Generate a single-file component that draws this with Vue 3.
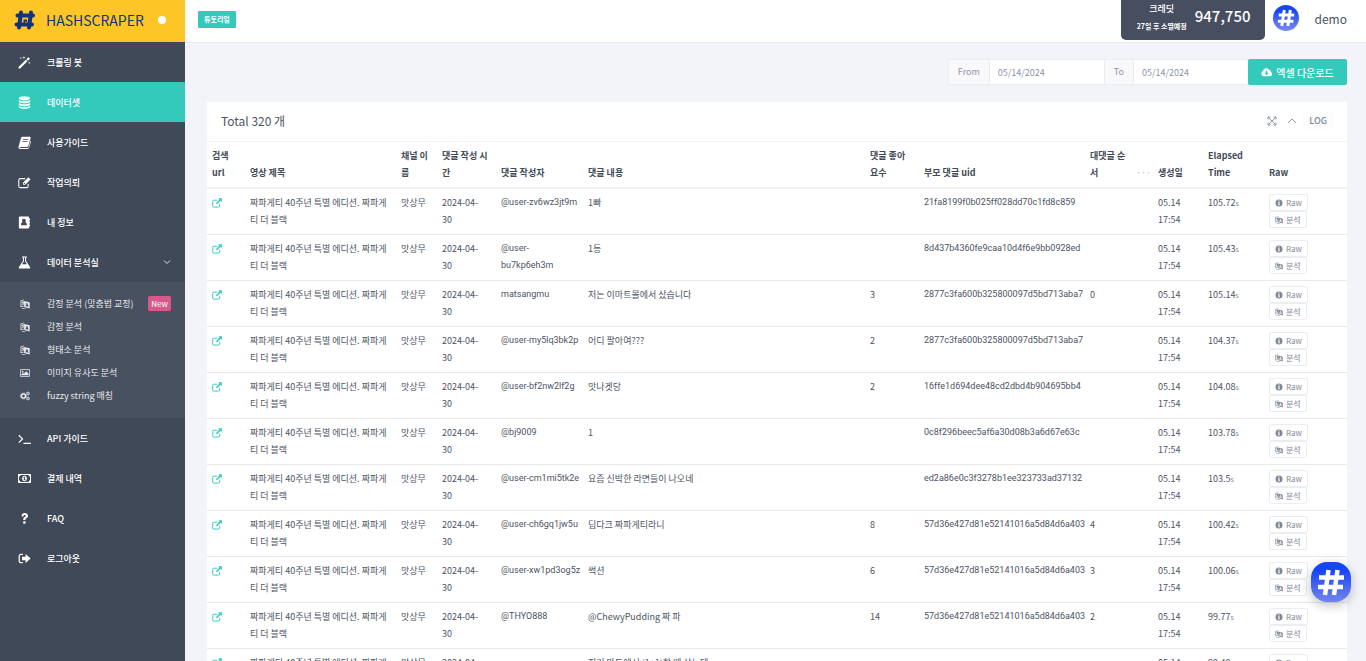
<script setup>
import { ref } from 'vue'

const from = ref('05/14/2024')
const to = ref('05/14/2024')

const mainMenu = [
  { icon: 'magic', label: '크롤링 봇' },
  { icon: 'database', label: '데이터셋', active: true },
  { icon: 'book', label: '사용가이드' },
  { icon: 'edit', label: '작업의뢰' },
  { icon: 'contact', label: '내 정보' },
  { icon: 'flask', label: '데이터 분석실', open: true }
]
const subMenu = [
  { icon: 'lang', label: '감정 분석 (맞춤법 교정)', badge: 'New' },
  { icon: 'lang', label: '감정 분석' },
  { icon: 'lang', label: '형태소 분석' },
  { icon: 'image', label: '이미지 유사도 분석' },
  { icon: 'cogs', label: 'fuzzy string 매칭' }
]
const lowerMenu = [
  { icon: 'terminal', label: 'API 가이드' },
  { icon: 'money', label: '결제 내역' },
  { icon: 'question', label: 'FAQ' },
  { icon: 'signout', label: '로그아웃' }
]

const icons = {
  magic: '<path d="M1 13.2 9.6 4.600l2 2L3 15.200a1.400 1.400 0 0 1-2-2z"/><path d="m10.300 3.900 1.600-1.600a1.400 1.400 0 0 1 2 2l-1.600 1.600z"/><path d="M3.500 1l.4 1.100L5 2.500l-1.100.4L3.500 4l-.4-1.100L2 2.500l1.100-.4zM7.300 0l.5 1.500 1.500.5-1.500.5L7.300 4l-.5-1.500L5.300 2l1.500-.5zM14 7l.4 1.100 1.100.4-1.100.4L14 10l-.4-1.100-1.100-.4 1.100-.4z"/>',
  database: '<ellipse cx="8" cy="2.800" rx="7" ry="2.600"/><path d="M1 4.800c2.500 2 11.500 2 14 0v2c0 3-14 3-14 0zM1 8.500c2.500 2 11.500 2 14 0v2c0 3-14 3-14 0zM1 12.200c2.500 2 11.500 2 14 0v1.300c0 3-14 3-14 0z"/>',
  book: '<path fill-rule="evenodd" d="M5.800 1h8.400c1 0 1.600.8 1.300 1.800l-2.800 9.400c-.3.900-.9 1.300-1.900 1.300H2.900c-.7 0-.9.5-.4 1 .2.300.6.400 1 .4h8.300c.6 0 1-.3 1.200-.8l2.500-8.300c.5.400.6.900.4 1.500l-2.400 7.500c-.3.800-1 1.300-1.900 1.300H3C1.400 16 .2 14.800.6 13.300L3.500 3C3.900 1.600 4.600 1 5.800 1zm.4 3-.3 1h6.500l.3-1zm-.7 2.400-.3 1h6.500l.3-1z"/>',
  edit: '<path d="M12.500 9.500v3a1.800 1.800 0 0 1-1.800 1.800H2.800A1.800 1.800 0 0 1 1 12.500V5a1.800 1.800 0 0 1 1.800-1.800h6" fill="none" stroke="currentColor" stroke-width="1.300"/><path fill-rule="evenodd" d="m12.700 1.600 2.700 2.700-6.600 6.600H6.100V8.200zM7.200 8.700v1.100h1.100l.5-.5-1.100-1.100z"/>',
  contact: '<path fill-rule="evenodd" d="M2.500.5h9.700c.8 0 1.400.6 1.400 1.400v1.300h1.200v2.300h-1.200v1.300h1.200v2.400h-1.200v1.300h1.200v2.300h-1.200v1.300c0 .8-.6 1.400-1.400 1.400H2.500c-.8 0-1.400-.6-1.400-1.400V1.900c0-.8.6-1.400 1.400-1.400zm4.800 3a2.300 2.300 0 0 0-1.600 4c-1.300.5-2 1.800-2 3.900h7.200c0-2.100-.7-3.400-2-3.900a2.300 2.300 0 0 0-1.600-4z"/>',
  flask: '<path fill-rule="evenodd" d="M5 .5h6v1.300h-1v4.400l4.800 7.200c.7 1.100.2 2.100-1.100 2.100H2.300c-1.300 0-1.800-1-1.100-2.100L6 6.200V1.800H5zm2.300 1.300v4.800L5 10h6L8.700 6.600V1.800z"/>',
  lang: '<path fill-rule="evenodd" d="M6.500 3 15.500 5.300V15l-9-2.300zm3.700 3.200-1.600 5.500 1.400.3.300-1 1.700.4.300 1.100 1.400.4-1.600-5.900zm.8 1.900.5 1.900-1.200-.3z"/><path d="M.8 2.300 6.500.7v1.400L2.200 3.300v8.200l4.300-1.200v1.400L.8 13.200z"/><path d="M3 4.500 6 3.700v5.100l-1-.2-1.200 1-.7-.8c.8-.6 1.200-1.400 1.300-2.500L3 6zM3.500 14c2 1.200 4 1.300 6 .6v1.100c-2.300.8-4.700.4-6.700-.8z"/>',
  image: '<path fill-rule="evenodd" d="M1.200 2h13.600c.7 0 1.200.5 1.200 1.200v9.600c0 .7-.5 1.200-1.200 1.200H1.200C.5 14 0 13.500 0 12.800V3.200C0 2.500.5 2 1.200 2zm0 1.200v9.600h13.600V3.200z"/><circle cx="4.200" cy="5.800" r="1.400"/><path d="M2.300 11.700V10l2.300-2.300 1.500 1.500L10 5.300l3.700 3.700v2.700z"/>',
  cogs: '<circle cx="5.500" cy="8" r="3.300" fill="none" stroke="currentColor" stroke-width="2.200"/><circle cx="5.500" cy="8" r="4.700" fill="none" stroke="currentColor" stroke-width="1.500" stroke-dasharray="2.100 1.590"/><circle cx="12.800" cy="4" r="1.800" fill="none" stroke="currentColor" stroke-width="1.400"/><circle cx="12.800" cy="4" r="2.700" fill="none" stroke="currentColor" stroke-width="1" stroke-dasharray="1.500 1.330"/><circle cx="12.800" cy="12" r="1.800" fill="none" stroke="currentColor" stroke-width="1.400"/><circle cx="12.800" cy="12" r="2.700" fill="none" stroke="currentColor" stroke-width="1" stroke-dasharray="1.500 1.330"/>',
  terminal: '<path d="m1 4 4.500 4.500L1 13M6.800 14H16" fill="none" stroke="currentColor" stroke-width="1.500"/>',
  money: '<path fill-rule="evenodd" d="M0 2.500h16v11H0zm3 1.200c0 1.100-.7 1.900-1.800 1.900v4.800c1.100 0 1.800.8 1.800 1.900h10c0-1.100.7-1.900 1.800-1.900V5.600c-1.100 0-1.800-.8-1.800-1.900z"/><path fill-rule="evenodd" d="M8 4.500c1.900 0 2.900 1.500 2.900 3.500s-1 3.500-2.900 3.500S5.100 10 5.100 8 6.100 4.500 8 4.500zm-.4 1.300-1.200 1 .5.600.6-.4v2.200h-.9v.9h2.900v-.9h-.9V5.800z"/>',
  question: '<path d="M4.300 5.200C4.500 2.700 6 1.200 8.300 1.200c2.400 0 4 1.500 4 3.500 0 1.500-.8 2.300-1.900 3-1 .6-1.200.9-1.200 1.800v.3H6.500v-.6c0-1.400.5-2.100 1.700-2.900.9-.6 1.200-.9 1.200-1.500S9 3.800 8.200 3.800c-.9 0-1.300.6-1.400 1.600zM6.500 11.500h2.800v3H6.500z"/>',
  signout: '<path d="M6 3H3.500A2 2 0 0 0 1.500 5v6a2 2 0 0 0 2 2H6" fill="none" stroke="currentColor" stroke-width="1.500"/><path d="M9.300 2.500 15.500 8l-6.200 5.500v-3.200H5V5.700h4.300z"/>',
  external: '<path d="M12.300 9v3.700a1.800 1.800 0 0 1-1.800 1.800H2.800A1.800 1.800 0 0 1 1 12.700V5.300a1.800 1.800 0 0 1 1.800-1.800h5.700" fill="none" stroke="currentColor" stroke-width="1.500"/><path d="M10 .5h5.800v5.800l-2-2-5.700 5.800-1.900-1.900L12 2.500z"/>',
  info: '<path fill-rule="evenodd" d="M8 1a7 7 0 1 1 0 14A7 7 0 0 1 8 1zM6.800 3v2h2.400V3zM6 6.500v1.300h.9v3.600H6v1.300h4v-1.300h-.9V6.500z"/>',
  cloud: '<path fill-rule="evenodd" d="M4 13.500a4 4 0 0 1-1-7.700 4.700 4.700 0 0 1 8.900-1.300c1.700 0 2.600 1.300 2.300 2.700A3.300 3.300 0 0 1 13 13.500zM7 5.500v3H4.800L8 11.900l3.200-3.400H9v-3z"/>'
}

const columns = [
  { key: 'url', label: '검색\nurl' },
  { key: 'title', label: '영상 제목' },
  { key: 'channel', label: '채널 이\n름' },
  { key: 'date', label: '댓글 작성 시\n간' },
  { key: 'author', label: '댓글 작성자' },
  { key: 'comment', label: '댓글 내용' },
  { key: 'likes', label: '댓글 좋아\n요수' },
  { key: 'uid', label: '부모 댓글 uid' },
  { key: 'order', label: '대댓글 순\n서' },
  { key: 'more', label: '···' },
  { key: 'created', label: '생성일' },
  { key: 'elapsed', label: 'Elapsed\nTime' },
  { key: 'raw', label: 'Raw' }
]

const rows = [
  ['@user-zv6wz3jt9m', '1빠', '', '21fa8199f0b025ff028dd70c1fd8c859', '', '105.72'],
  ['@user-\nbu7kp6eh3m', '1등', '', '8d437b4360fe9caa10d4f6e9bb0928ed', '', '105.43'],
  ['matsangmu', '저는 이마트몰에서 샀습니다', '3', '2877c3fa600b325800097d5bd713aba7', '0', '105.14'],
  ['@user-my5lq3bk2p', '어디 팔아여???', '2', '2877c3fa600b325800097d5bd713aba7', '', '104.37'],
  ['@user-bf2nw2lf2g', '맛나겟당', '2', '16ffe1d694dee48cd2dbd4b904695bb4', '', '104.08'],
  ['@bj9009', '1', '', '0c8f296beec5af6a30d08b3a6d67e63c', '', '103.78'],
  ['@user-cm1mi5tk2e', '요즘 신박한 라면들이 나오네', '', 'ed2a86e0c3f3278b1ee323733ad37132', '', '103.5'],
  ['@user-ch6gq1jw5u', '딥다크 짜파게티라니', '8', '57d36e427d81e52141016a5d84d6a403', '4', '100.42'],
  ['@user-xw1pd3og5z', '썩션', '6', '57d36e427d81e52141016a5d84d6a403', '3', '100.06'],
  ['@THYO888', '@ChewyPudding 짜 파', '14', '57d36e427d81e52141016a5d84d6a403', '2', '99.77'],
  ['', '저거 마트에서 (1+1)할 때 샀는데', '', '', '', '99.48']
]
</script>

<template>
  <div class="app">
    <aside class="sidebar">
      <a href="#" class="brand">
        <svg class="brand-mark" viewBox="0 0 22 20">
          <path d="M7 2.500 5 17.500M17 2.500l-2 15M3.500 5.500h15.500M2.500 14.500h15.500" fill="none" stroke="#12347c" stroke-width="4" stroke-linecap="round" />
          <path d="M9.500 13V9.500h3.500V12h-1.500v-1H11v2z" fill="#12347c" />
        </svg>
        <span>HASHSCRAPER</span>
        <i class="dot"></i>
      </a>
      <nav>
        <a v-for="m in mainMenu" :key="m.label" href="#" class="item" :class="{ active: m.active }">
          <svg class="ico" viewBox="0 0 16 16" v-html="icons[m.icon]"></svg>
          <span>{{ m.label }}</span>
          <svg v-if="m.open" class="chev" viewBox="0 0 8 8"><path d="m1 2.500 3 3 3-3" /></svg>
        </a>
        <div class="sub">
          <a v-for="m in subMenu" :key="m.label" href="#" class="subitem">
            <svg class="ico" viewBox="0 0 16 16" v-html="icons[m.icon]"></svg>
            <span>{{ m.label }}</span>
            <b v-if="m.badge" class="new">{{ m.badge }}</b>
          </a>
        </div>
        <a v-for="m in lowerMenu" :key="m.label" href="#" class="item">
          <svg class="ico" viewBox="0 0 16 16" v-html="icons[m.icon]"></svg>
          <span>{{ m.label }}</span>
        </a>
      </nav>
    </aside>

    <div class="main">
      <header class="topbar">
        <button type="button" class="tutorial">튜토리얼</button>
        <div class="account">
          <div class="credit">
            <div class="credit-label">
              <span>크레딧</span>
              <small>27일 후 소멸예정</small>
            </div>
            <strong>947,750</strong>
          </div>
          <svg class="avatar" viewBox="0 0 26 26">
            <defs>
              <linearGradient id="blue" x1="0" y1="0" x2="0" y2="1">
                <stop offset="0.2" stop-color="#1745f5" />
                <stop offset="1" stop-color="#7c8cf0" />
              </linearGradient>
            </defs>
            <circle cx="13" cy="13" r="13" fill="url(#blue)" />
            <path d="M11.300 5 8.800 21M17.300 5l-2.500 16M5.700 10h15.500M4.900 16.200h15.500" fill="none" stroke="#fff" stroke-width="3" />
          </svg>
          <a href="#" class="user">demo</a>
        </div>
      </header>

      <main class="content">
        <form class="filters" @submit.prevent>
          <label for="from">From</label>
          <input id="from" v-model="from" type="text" />
          <label for="to">To</label>
          <input id="to" v-model="to" type="text" />
          <button type="submit" class="download">
            <svg viewBox="0 0 16 16" v-html="icons.cloud"></svg>엑셀 다운로드
          </button>
        </form>

        <section class="card">
          <div class="card-head">
            <h1>Total 320 개</h1>
            <div class="tools">
              <button type="button" aria-label="Expand">
                <svg viewBox="0 0 10 10"><path d="M1 3.500V1h2.500M6.500 1H9v2.500M9 6.500V9H6.500M3.500 9H1V6.500M1 1l8 8M9 1 1 9" /></svg>
              </button>
              <button type="button" aria-label="Collapse">
                <svg viewBox="0 0 10 10"><path d="m1 7 4-4 4 4" /></svg>
              </button>
              <button type="button" class="log">LOG</button>
            </div>
          </div>
          <table>
            <colgroup>
              <col v-for="c in columns" :key="c.key" :class="'w-' + c.key" />
            </colgroup>
            <thead>
              <tr>
                <th v-for="c in columns" :key="c.key" :class="{ more: c.key === 'more' }">{{ c.label }}</th>
              </tr>
            </thead>
            <tbody>
              <tr v-for="(r, i) in rows" :key="i">
                <td><a href="#" class="ext" aria-label="Open"><svg viewBox="0 0 16 16" v-html="icons.external"></svg></a></td>
                <td class="wrap">짜파게티 40주년 특별 에디션. 짜파게티 더 블랙</td>
                <td>맛상무</td>
                <td>{{ '2024-04-\n30' }}</td>
                <td class="code">{{ r[0] }}</td>
                <td>{{ r[1] }}</td>
                <td>{{ r[2] }}</td>
                <td class="code">{{ r[3] }}</td>
                <td>{{ r[4] }}</td>
                <td></td>
                <td>{{ '05.14\n17:54' }}</td>
                <td>{{ r[5] }}<small class="sec">s</small></td>
                <td>
                  <div class="actions">
                    <button type="button"><svg viewBox="0 0 16 16" v-html="icons.info"></svg>Raw</button>
                    <button type="button"><svg viewBox="0 0 16 16" v-html="icons.lang"></svg>분석</button>
                  </div>
                </td>
              </tr>
            </tbody>
          </table>
        </section>
      </main>
    </div>

    <button type="button" class="chat" aria-label="Chat">
      <svg viewBox="0 0 40 40"><path d="M17.500 8 14 33M26.500 8 23 33M8 15.500h25M7 25h25" fill="none" stroke="#fff" stroke-width="4.500" /></svg>
    </button>
  </div>
</template>

<style>
body {
  background: #f3f4f9;
}
</style>

<style scoped>
.app {
  display: flex;
  height: 100vh;
  overflow: hidden;
  font-family: "Noto Sans CJK KR", sans-serif;
  font-size: 9px;
  line-height: 17px;
  color: #4c5463;
}
.app *,
.app *::before {
  box-sizing: border-box;
}
a {
  color: inherit;
  text-decoration: none;
}
button,
input {
  font: inherit;
  color: inherit;
  margin: 0;
}
button {
  display: inline-flex;
  align-items: center;
  justify-content: center;
  padding: 0;
  border: 0;
  background: none;
  cursor: pointer;
}
svg {
  display: block;
  fill: currentColor;
  flex: none;
}

/* sidebar */
.sidebar {
  flex: none;
  width: 185px;
  background: #404957;
  color: #fff;
}
.brand {
  display: flex;
  align-items: center;
  height: 42px;
  padding: 0 19px 2px 14px;
  background: #fdc526;
  color: #12347c;
  font-size: 14px;
}
.brand-mark {
  width: 22px;
  height: 20px;
  margin-right: 10px;
}
.dot {
  width: 8px;
  height: 8px;
  margin-left: auto;
  border-radius: 50%;
  background: #fff;
}
.item,
.subitem {
  display: flex;
  align-items: center;
  padding: 0 14px 0 18px;
}
.item {
  height: 40px;
  font-weight: 500;
}
.active {
  background: #34cabb;
}
.ico {
  width: 13px;
  height: 13px;
  margin-right: 16px;
}
.chev {
  width: 8px;
  height: 8px;
  margin-left: auto;
}
.chev path {
  fill: none;
  stroke: #dfe2e8;
}
.sub {
  padding: 10px 0 11px;
  background: #48515f;
  color: #e6e8ec;
}
.subitem {
  height: 23px;
}
.subitem .ico {
  width: 10px;
  height: 10px;
  margin: 0 17px 0 2px;
}
.new {
  margin-left: auto;
  padding: 0 3px;
  border-radius: 2px;
  background: #d9588b;
  color: #fff;
  font-size: 8px;
  font-weight: 400;
  line-height: 15px;
}

/* header */
.main {
  flex: 1;
  min-width: 0;
}
.topbar {
  display: flex;
  align-items: center;
  justify-content: space-between;
  height: 43px;
  padding: 0 19px 0 13px;
  background: #fff;
  border-bottom: 1px solid #e9ebf0;
}
.tutorial {
  height: 17px;
  padding: 0 6px;
  margin-bottom: 3px;
  border-radius: 1px;
  background: #34cabb;
  color: #fff;
  font-size: 7px;
  font-weight: 700;
}
.account {
  display: flex;
  align-items: flex-start;
  align-self: flex-start;
}
.credit {
  display: flex;
  align-items: flex-start;
  gap: 8px;
  height: 40px;
  padding: 0 14px 0 16px;
  border-radius: 0 0 5px 5px;
  background: #474e5f;
  color: #fff;
}
.credit-label {
  display: flex;
  flex-direction: column;
  align-items: center;
  font-weight: 500;
}
.credit-label small {
  font-size: 7px;
  font-weight: 700;
  line-height: 18px;
}
.credit strong {
  font-size: 15px;
  font-weight: 500;
  line-height: 32px;
}
.avatar {
  width: 26px;
  height: 26px;
  margin: 5px 16px 0 8px;
}
.user {
  font-size: 12px;
  line-height: 38px;
}

/* filters */
.content {
  padding: 16px 19px 0 22px;
}
.filters {
  display: flex;
  justify-content: flex-end;
  height: 26px;
  margin-bottom: 17px;
  color: #8d94a5;
}
.filters label {
  padding: 0 9px;
  border: 1px solid #ebecf0;
  border-right: 0;
  background: #f9f9fb;
  line-height: 24px;
}
.filters input {
  width: 115px;
  padding: 0 8px;
  border: 1px solid #ebecf0;
  border-right: 0;
  border-radius: 0;
  background: #fff;
  outline: 0;
}
.download {
  gap: 4px;
  width: 99px;
  border-radius: 2px;
  background: #34cabb;
  color: #fff;
  font-size: 10px;
  font-weight: 500;
}
.download svg {
  width: 11px;
  height: 11px;
}

/* table card */
.card {
  background: #fff;
}
.card-head {
  display: flex;
  align-items: center;
  justify-content: space-between;
  height: 40px;
  padding: 0 14px 2px;
  border-bottom: 1px solid #f1f2f5;
}
h1 {
  margin: 0;
  font-size: 12px;
  font-weight: 400;
}
.tools {
  display: flex;
  gap: 10px;
  color: #9299a8;
}
.tools svg {
  width: 10px;
  height: 10px;
  fill: none;
  stroke: currentColor;
}
.log {
  padding: 0 6px;
  margin-left: -4px;
  background: #fcfcfd;
  color: #8088a0;
  font-weight: 500;
}
table {
  width: 100%;
  table-layout: fixed;
  border-collapse: separate;
  border-spacing: 0;
}
th,
td {
  padding: 5px 0 6px 5px;
  border-bottom: 1px solid #e6e9ee;
  text-align: left;
  vertical-align: top;
  white-space: pre;
}
th {
  vertical-align: bottom;
  border-bottom: 2px solid #f1f2f5;
  font-weight: 700;
  color: #434b59;
}
td.wrap {
  padding-right: 5px;
  white-space: normal;
}
td.code {
  font-family: Roboto, "Noto Sans CJK KR", sans-serif;
}
th.more {
  color: #b5bac4;
  font-weight: 400;
}
.w-url { width: 38px; }
.w-title { width: 151px; }
.w-channel { width: 41px; }
.w-date { width: 59px; }
.w-author { width: 87px; }
.w-likes { width: 54px; }
.w-uid { width: 166px; }
.w-order { width: 46px; }
.w-more { width: 22px; }
.w-created { width: 50px; }
.w-elapsed { width: 61px; }
.w-raw { width: 83px; }
.ext {
  display: inline-flex;
  height: 17px;
  align-items: center;
  vertical-align: top;
  color: #34cabb;
}
.ext svg {
  width: 10px;
  height: 10px;
}
.sec {
  font-size: 7px;
  color: #7d8595;
}
.actions {
  display: flex;
  flex-direction: column;
  align-items: flex-start;
}
.actions button {
  gap: 3px;
  height: 17px;
  padding: 0 5px;
  border: 1px solid #ebedf1;
  border-radius: 2px;
  background: #fff;
  color: #7f8797;
  font-size: 8px;
}
.actions svg {
  width: 8px;
  height: 8px;
}

.chat {
  position: fixed;
  right: 15px;
  bottom: 59px;
  width: 40px;
  height: 40px;
  border-radius: 16px;
  background: linear-gradient(#1745f5 20%, #7284ef);
  box-shadow: 0 3px 12px rgba(0, 0, 0, 0.25);
}
.chat svg {
  width: 40px;
  height: 40px;
}
</style>
